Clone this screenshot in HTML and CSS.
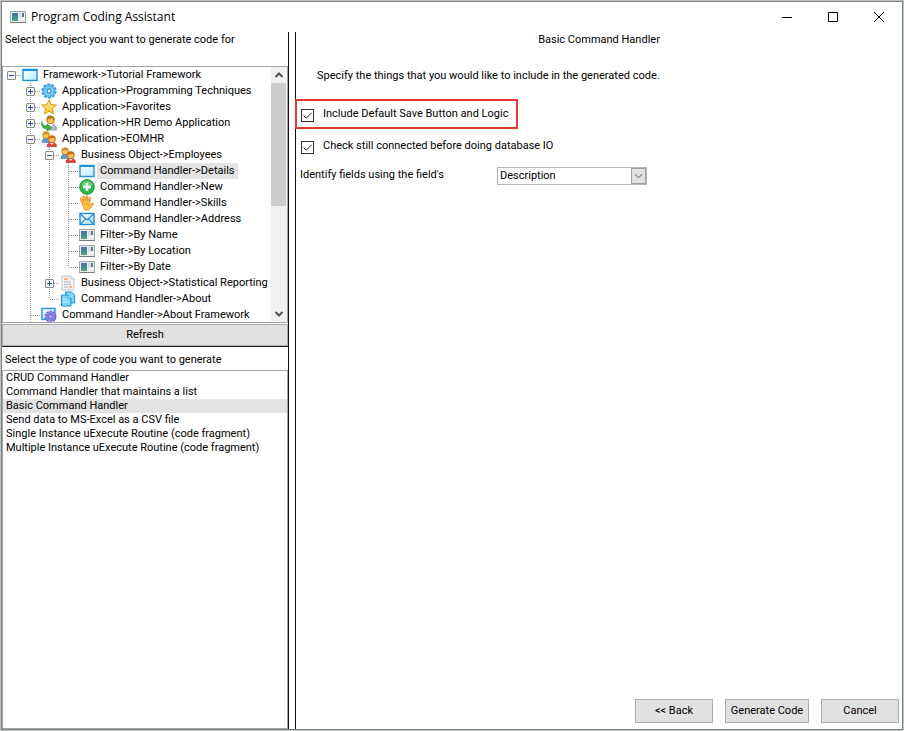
FILE: index.html
```html
<!DOCTYPE html>
<html lang="en">
<head>
<meta charset="utf-8">
<title>Program Coding Assistant</title>
<link rel="stylesheet" href="styles.css">
</head>
<body>
<svg class="defs" aria-hidden="true">
  <defs>
    <linearGradient id="g-sky" x1="0" y1="0" x2="1" y2="1"><stop offset="0" stop-color="#fff"/><stop offset="1" stop-color="#b9e9fc"/></linearGradient>
    <linearGradient id="g-teal" x1="0" y1="0" x2="0" y2="1"><stop offset="0" stop-color="#3f73a8"/><stop offset="1" stop-color="#4aa67a"/></linearGradient>
    <linearGradient id="g-gold" x1="0" y1="0" x2="0" y2="1"><stop offset="0" stop-color="#fff3a0"/><stop offset="1" stop-color="#fcc01e"/></linearGradient>
    <symbol id="i-window" viewBox="0 0 16 16"><rect x="1" y="2.5" width="14" height="11" fill="url(#g-sky)" stroke="#1a94dc" stroke-width="1.4"/><path d="M1 3h14" stroke="#1a94dc" stroke-width="2"/></symbol>
    <symbol id="i-gear" viewBox="0 0 16 16"><circle cx="8" cy="8" r="6.6" fill="none" stroke="#3a9fe2" stroke-width="2" stroke-dasharray="2.9 1.25"/><circle cx="8" cy="8" r="6" fill="#62bff3" stroke="#3a9fe2" stroke-width=".7"/><circle cx="8" cy="8" r="3.7" fill="none" stroke="#8ad4fa"/><circle cx="8" cy="8" r="2" fill="#fff" stroke="#1f80c8"/></symbol>
    <symbol id="i-star" viewBox="0 0 16 16"><path d="M8 .8l2.1 4.800 5.200.5-3.900 3.500 1.200 5.300L8 12.200l-4.600 2.700 1.200-5.300L.7 6.100l5.200-.5z" fill="url(#g-gold)" stroke="#dc9418" stroke-linejoin="round"/></symbol>
    <symbol id="i-user" viewBox="0 0 16 16"><path d="M6 15c0-4 2-6 4.500-6S15.500 11 15.500 15z" fill="#b4b9c0" stroke="#7c848d" stroke-width=".7"/><path d="M8 9l2 3 2-3z" fill="#fff"/><circle cx="9.500" cy="5" r="3.800" fill="#fcc64a" stroke="#a76612" stroke-width=".8"/><path d="M5.700 4.500C5 1 8 .2 10 .7c3 .2 4 2 3.200 5-1-1-1.200-2-1.700-2.700-2 1-4 1-5.800 1.500z" fill="#b87814"/><path d="M1 6.500c0 3 2 4.700 5 4.600V9l4.500 3.700L6 16v-2.200C2 14 0 11 1 6.500z" fill="#36b449" stroke="#16852b" stroke-width=".6"/></symbol>
    <symbol id="i-users" viewBox="0 0 16 16"><path d="M1 11.500C1 8.500 2.500 7 5 7s4 1.500 4 4.500z" fill="#5a98df" stroke="#3167aa" stroke-width=".5"/><circle cx="5" cy="4.300" r="3.300" fill="#fccf56" stroke="#b76c12" stroke-width=".8"/><path d="M1.700 4C1.500 1 3.500.2 5.500.5 8 .7 8.800 2 8.300 4.500L7 2.700C5 3.500 3 3.200 1.700 4z" fill="#d78b1d"/><path d="M6 15.500c0-3 2-4 4.800-4s4.700 1 4.700 4z" fill="#ee4034" stroke="#b71c18" stroke-width=".6"/><path d="M9 12l1.800 2 1.700-2z" fill="#fff"/><circle cx="10.800" cy="8.300" r="3.500" fill="#fdbd55" stroke="#b65a13" stroke-width=".8"/><path d="M7.300 8c-.2-3 2-4 4-3.500 2.500 0 3.500 2 3 4.500l-1.500-2.300c-2 .8-4 .4-5.500 1.300z" fill="#c97016"/></symbol>
    <symbol id="i-add" viewBox="0 0 16 16"><circle cx="8" cy="8" r="7.300" fill="#2bb845" stroke="#159334"/><path d="M2.500 7a5.500 5 0 0 1 11 0z" fill="#68d375"/><path d="M8 4v8M4 8h8" stroke="#fff" stroke-width="2.600"/></symbol>
    <symbol id="i-hand" viewBox="0 0 16 16"><path d="M4.500 12.500L3 8.500 1.200 4.200C.9 3 2.300 2.600 2.900 3.700L4.500 6.500 3.700 2c-.1-1.300 1.400-1.500 1.800-.4L6.700 5.500 7 1.500C7.100.3 8.700.4 8.700 1.600L8.800 6l1.100-3c.5-1.100 1.900-.6 1.600.6L10.500 8l.8 1.500 1.800-1.300c1-.6 2 .4 1.200 1.300L11.500 13 9.500 15H6z" fill="#fdbc4b" stroke="#df8518" stroke-width=".8" stroke-linejoin="round"/><path d="M5.500 9c2-1 3.800.3 4 2.500" fill="none" stroke="#e4932b" stroke-width=".8"/></symbol>
    <symbol id="i-mail" viewBox="0 0 16 16"><rect x="1" y="2.500" width="14" height="11" fill="url(#g-sky)" stroke="#1a8edb" stroke-width="1.400"/><path d="M1.500 3l6.500 6 6.500-6M1.500 13l5-5.200M14.500 13l-5-5.200" fill="none" stroke="#1a8edb" stroke-width="1.200"/></symbol>
    <symbol id="i-filter" viewBox="0 0 16 16"><rect x=".5" y="2.500" width="15" height="11" fill="#eef0f0" stroke="#a4a8aa"/><path d="M.5 13.500h15" stroke="#777"/><rect x="2" y="4" width="6" height="8" fill="url(#g-teal)"/><rect x="9" y="4" width="2" height="5" fill="#d3dce2"/><rect x="12" y="4" width="2" height="4" fill="#477b79"/></symbol>
    <symbol id="i-report" viewBox="0 0 16 16"><path d="M2 1h9l3 3v11H2z" fill="#f3f3f5" stroke="#c3c4ca"/><path d="M11 1v3h3" fill="#fff" stroke="#c3c4ca"/><path d="M4 4h4" stroke="#ff942f" stroke-width="1.300"/><path d="M4 7h7M4 9.500h7M4 12h4" stroke="#b6b9c2"/><path d="M9 12h3" stroke="#ff942f" stroke-width="1.300"/></symbol>
    <symbol id="i-copy" viewBox="0 0 16 16"><path d="M5.500 1h6L14.500 4v8h-9z" fill="#82d8fa" stroke="#1597d9"/><path d="M1.500 4H8l3 3v8H1.500z" fill="#7bd3fa" stroke="#1597d9"/><path d="M8 4v3h3" fill="#e4f8ff" stroke="#1597d9" stroke-width=".7"/><path d="M3 8h4M3 11h6" stroke="#c5effe"/></symbol>
    <symbol id="i-about" viewBox="0 0 16 16"><rect x="1" y="1.500" width="13" height="11" fill="url(#g-sky)" stroke="#1a94dc" stroke-width="1.400"/><circle cx="9.500" cy="9.500" r="5" fill="none" stroke="#6a62c8" stroke-width="2" stroke-dasharray="2.200 .95"/><circle cx="9.500" cy="9.500" r="4.800" fill="#8780df"/><circle cx="9.500" cy="9.500" r="1.600" fill="#d2ceff" stroke="#5750b5" stroke-width=".7"/></symbol>
  </defs>
</svg>
<main class="window">
  <header class="titlebar">
    <svg class="icon"><use href="#i-filter"/></svg>
    <h1>Program Coding Assistant</h1>
    <button type="button" aria-label="Minimize"><svg viewBox="0 0 12 12"><path d="M1 6.500h10"/></svg></button>
    <button type="button" aria-label="Maximize"><svg viewBox="0 0 12 12"><path d="M1.500 1.500h9v9h-9z"/></svg></button>
    <button type="button" aria-label="Close"><svg viewBox="0 0 12 12"><path d="M1 1l10 10M11 1L1 11"/></svg></button>
  </header>
  <div class="panes">
    <section class="left">
      <h2 class="object-label">Select the object you want to generate code for</h2>
      <div class="tree-box">
        <ul class="tree">
          <li><button type="button" class="node root" aria-label="Collapse"><i class="toggle minus"></i></button><svg class="icon"><use href="#i-window"/></svg><span>Framework-&gt;Tutorial Framework</span></li>
          <li><i class="pad"></i><button type="button" class="node" aria-label="Expand"><i class="toggle plus"></i></button><svg class="icon"><use href="#i-gear"/></svg><span>Application-&gt;Programming Techniques</span></li>
          <li><i class="pad"></i><button type="button" class="node" aria-label="Expand"><i class="toggle plus"></i></button><svg class="icon"><use href="#i-star"/></svg><span>Application-&gt;Favorites</span></li>
          <li><i class="pad"></i><button type="button" class="node" aria-label="Expand"><i class="toggle plus"></i></button><svg class="icon"><use href="#i-user"/></svg><span>Application-&gt;HR Demo Application</span></li>
          <li><i class="pad"></i><button type="button" class="node" aria-label="Collapse"><i class="toggle minus"></i></button><svg class="icon"><use href="#i-users"/></svg><span>Application-&gt;EOMHR</span></li>
          <li><i class="pad"></i><i class="pad line"></i><button type="button" class="node" aria-label="Collapse"><i class="toggle minus"></i></button><svg class="icon"><use href="#i-users"/></svg><span>Business Object-&gt;Employees</span></li>
          <li><i class="pad"></i><i class="pad line"></i><i class="pad line"></i><i class="node"></i><svg class="icon"><use href="#i-window"/></svg><span class="selected">Command Handler-&gt;Details</span></li>
          <li><i class="pad"></i><i class="pad line"></i><i class="pad line"></i><i class="node"></i><svg class="icon"><use href="#i-add"/></svg><span>Command Handler-&gt;New</span></li>
          <li><i class="pad"></i><i class="pad line"></i><i class="pad line"></i><i class="node"></i><svg class="icon"><use href="#i-hand"/></svg><span>Command Handler-&gt;Skills</span></li>
          <li><i class="pad"></i><i class="pad line"></i><i class="pad line"></i><i class="node"></i><svg class="icon"><use href="#i-mail"/></svg><span>Command Handler-&gt;Address</span></li>
          <li><i class="pad"></i><i class="pad line"></i><i class="pad line"></i><i class="node"></i><svg class="icon"><use href="#i-filter"/></svg><span>Filter-&gt;By Name</span></li>
          <li><i class="pad"></i><i class="pad line"></i><i class="pad line"></i><i class="node"></i><svg class="icon"><use href="#i-filter"/></svg><span>Filter-&gt;By Location</span></li>
          <li><i class="pad"></i><i class="pad line"></i><i class="pad line"></i><i class="node last"></i><svg class="icon"><use href="#i-filter"/></svg><span>Filter-&gt;By Date</span></li>
          <li><i class="pad"></i><i class="pad line"></i><button type="button" class="node" aria-label="Expand"><i class="toggle plus"></i></button><svg class="icon"><use href="#i-report"/></svg><span>Business Object-&gt;Statistical Reporting</span></li>
          <li><i class="pad"></i><i class="pad line"></i><i class="node last"></i><svg class="icon"><use href="#i-copy"/></svg><span>Command Handler-&gt;About</span></li>
          <li><i class="pad"></i><i class="node"></i><svg class="icon"><use href="#i-about"/></svg><span>Command Handler-&gt;About Framework</span></li>
        </ul>
        <div class="scrollbar">
          <button type="button" aria-label="Scroll up"><svg viewBox="0 0 10 10"><path d="M1.500 7L5 3.500 8.500 7"/></svg></button>
          <div class="track"><div class="thumb"></div></div>
          <button type="button" aria-label="Scroll down"><svg viewBox="0 0 10 10"><path d="M1.500 3L5 6.500 8.500 3"/></svg></button>
        </div>
      </div>
      <button type="button" class="push refresh">Refresh</button>
      <h2 class="type-label">Select the type of code you want to generate</h2>
      <ul class="types">
        <li>CRUD Command Handler</li>
        <li>Command Handler that maintains a list</li>
        <li class="selected">Basic Command Handler</li>
        <li>Send data to MS-Excel as a CSV file</li>
        <li>Single Instance uExecute Routine (code fragment)</li>
        <li>Multiple Instance uExecute Routine (code fragment)</li>
      </ul>
    </section>
    <form class="right">
      <h2>Basic Command Handler</h2>
      <p>Specify the things that you would like to include in the generated code.</p>
      <label class="check marked"><span class="box"><input type="checkbox" checked><svg viewBox="0 0 13 13" aria-hidden="true"><path d="M2.500 6.500l2.700 2.700 5.300-5.400"/></svg></span>Include Default Save Button and Logic</label>
      <label class="check"><span class="box"><input type="checkbox" checked><svg viewBox="0 0 13 13" aria-hidden="true"><path d="M2.500 6.500l2.700 2.700 5.300-5.400"/></svg></span>Check still connected before doing database IO</label>
      <div class="field">
        <label for="identify">Identify fields using the field's</label>
        <div class="combo">
          <select id="identify"><option>Description</option></select>
          <svg viewBox="0 0 10 10" aria-hidden="true"><path d="M1 3l4 4 4-4"/></svg>
        </div>
      </div>
      <footer>
        <button type="button" class="push">&lt;&lt; Back</button>
        <button type="button" class="push wide">Generate Code</button>
        <button type="button" class="push">Cancel</button>
      </footer>
    </form>
  </div>
</main>
</body>
</html>
```
FILE: styles.css
```css
* { box-sizing: border-box; }
body {
  margin: 0;
  background: #c0c4c0;
  color: #000;
  font: 11px/16px Roboto, "Liberation Sans", sans-serif;
}
h1, h2, p, ul { margin: 0; padding: 0; font: inherit; }
ul { list-style: none; }
button { margin: 0; padding: 0; border: 0; background: none; color: inherit; font: inherit; }
.defs { position: absolute; width: 0; height: 0; }
.icon { flex: none; width: 16px; height: 16px; }

.window {
  display: flex;
  flex-direction: column;
  height: calc(100vh - 2px);
  margin: 1px;
  border: 1px solid #7c827c;
  background: #fff;
}
.titlebar { display: flex; align-items: center; height: 30px; padding-left: 8px; }
.titlebar h1 { flex: 1; padding-left: 5px; font: 12px/16px "Open Sans", sans-serif; }
.titlebar button { display: grid; place-items: center; width: 46px; height: 30px; }
.titlebar button svg { width: 12px; height: 12px; fill: none; stroke: #000; }

.panes { display: flex; flex: 1; min-height: 0; }
.left { display: flex; flex-direction: column; width: 287px; border-right: 1px solid #111; }
.object-label { height: 34px; padding: 0 3px; }
.tree-box { display: flex; height: 257px; border: 1px solid #a0a4ac; }
.tree { flex: 1; min-width: 0; overflow: hidden; }
.tree li { display: flex; height: 16px; white-space: nowrap; }
.tree span { margin-left: 2px; padding: 0 3px; }
.selected { background: #e3e3e3; }
.pad, .node { flex: none; width: 19px; height: 16px; }
.line, .node {
  background-repeat: no-repeat;
  background-image: repeating-linear-gradient(#999 0 1px, transparent 1px 2px), repeating-linear-gradient(90deg, #999 0 1px, transparent 1px 2px);
  background-size: 1px 16px, 10px 1px;
  background-position: 8px 0, 9px 8px;
}
.line { background-size: 1px 16px, 0 0; }
.root { background-size: 0 0, 10px 1px; }
.last { background-size: 1px 8px, 10px 1px; }
.node { display: block; padding-left: 4px; }
.toggle {
  display: block;
  width: 9px;
  height: 9px;
  border: 1px solid #8c8c8c;
  border-radius: 1px;
  background: linear-gradient(#2f4fa8, #2f4fa8) center / 5px 1px no-repeat, #f4f4f4;
}
.plus { background: linear-gradient(#2f4fa8, #2f4fa8) center / 5px 1px no-repeat, linear-gradient(#2f4fa8, #2f4fa8) center / 1px 5px no-repeat, #f4f4f4; }
.scrollbar { display: flex; flex: none; flex-direction: column; width: 16px; background: #f0f0f0; }
.scrollbar button { display: grid; place-items: center; height: 16px; }
.scrollbar svg { width: 10px; height: 10px; fill: none; stroke: #505050; stroke-width: 2; }
.track { flex: 1; }
.thumb { height: 55%; margin-right: 1px; background: #cdcdcd; }

.push { height: 24px; border: 1px solid #adadad; background: #e1e1e1; text-align: center; }
.refresh { height: 22px; margin: 1px 0 0; }
.type-label { height: 24px; padding: 5px 3px 0; border-top: 1px solid #222; }
.types { flex: 1; border: 1px solid #a0a4ac; line-height: 14px; }
.types li { padding-left: 3px; }

.right { display: flex; flex: 1; flex-direction: column; margin-left: 6px; border-left: 1px solid #111; }
.right h2 { text-align: center; }
.right p { margin: 20px 0 15px; padding-left: 21px; }
.check { display: flex; align-items: center; align-self: flex-start; height: 30px; padding-left: 5px; }
.marked { margin: 0 0 2px -1px; padding: 0 8px 0 4px; border: 2px solid #e53935; }
.box { position: relative; height: 13px; margin: 2px 9px 0 0; }
.box input { appearance: none; display: block; width: 13px; height: 13px; margin: 0; border: 1px solid #333; }
.box svg { position: absolute; inset: 0; width: 13px; height: 13px; fill: none; stroke: #222; pointer-events: none; }
.field { display: flex; margin-top: 6px; padding-left: 4px; }
.field label { width: 197px; }
.combo { position: relative; width: 150px; height: 18px; border: 1px solid #b4b4bc; }
.combo select { appearance: none; display: block; width: 100%; height: 16px; padding: 0 2px; border: 0; background: #fff; color: inherit; font: inherit; }
.combo svg { position: absolute; top: 0; right: 0; width: 15px; height: 16px; padding: 2px; border: 1px solid #a0a0a0; background: #e1e1e1; fill: none; stroke: #444; pointer-events: none; }
.right footer { display: flex; gap: 12px; justify-content: flex-end; margin-top: auto; padding: 0 3px 6px; }
.right footer .push { width: 78px; }
.right footer .wide { width: 84px; }
```
